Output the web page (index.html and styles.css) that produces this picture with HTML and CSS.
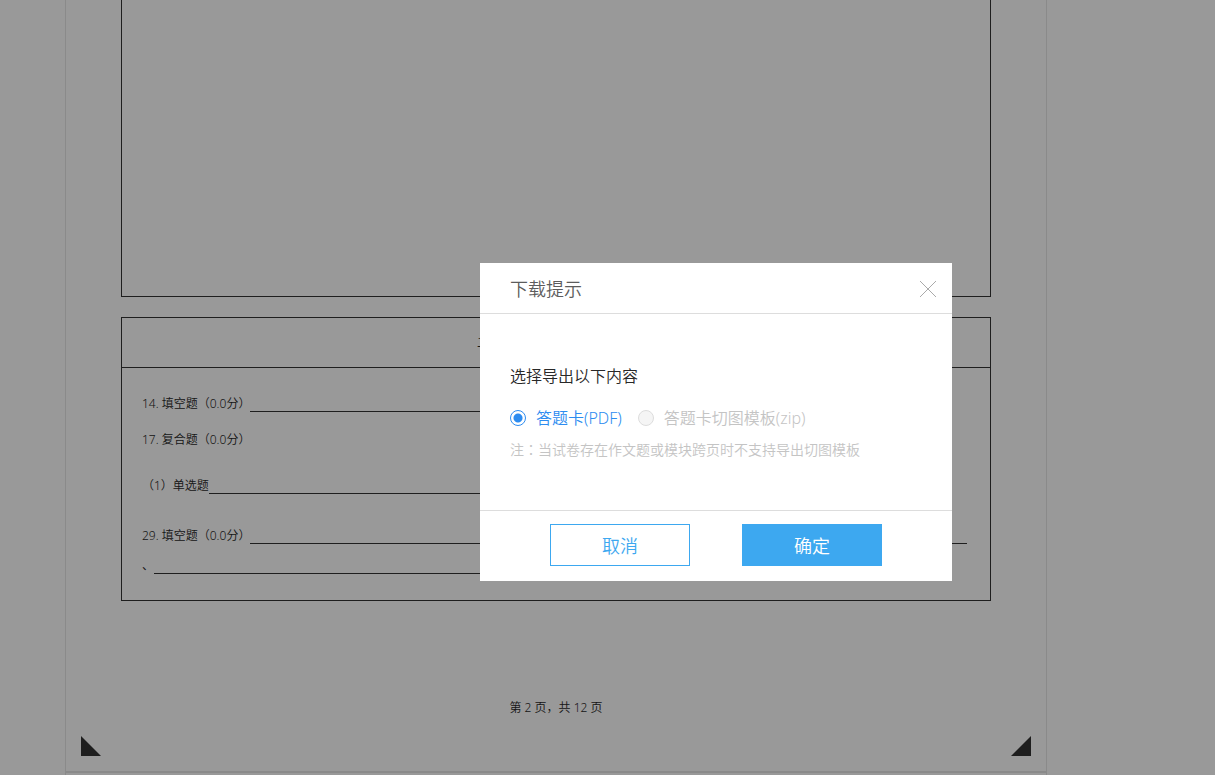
FILE: index.html
```html
<!DOCTYPE html>
<html lang="zh-CN">
<head>
<meta charset="utf-8">
<title>答题卡</title>
<link rel="stylesheet" href="styles.css">
</head>
<body>
<main class="workspace">
  <section class="sheet">
    <div class="answer-area"></div>
    <div class="question-box">
      <h2 class="box-title">二. 填空题（每小题共 0.0分）</h2>
      <div class="questions">
        <div class="question"><span>14. 填空题（0.0分）</span><span class="blank"></span></div>
        <div class="question question-group"><span>17. 复合题（0.0分）</span></div>
        <div class="question question-sub"><span>（1）单选题</span><span class="blank"></span></div>
        <div class="question question-last"><span>29. 填空题（0.0分）</span><span class="blank"></span></div>
        <div class="question question-more"><span>、</span><span class="blank"></span></div>
      </div>
    </div>
    <p class="page-number">第 2 页，共 12 页</p>
    <div class="marks">
      <svg class="mark" viewBox="0 0 20 20" aria-hidden="true"><path d="M0 0V20H20Z"/></svg>
      <svg class="mark" viewBox="0 0 20 20" aria-hidden="true"><path d="M20 0V20H0Z"/></svg>
    </div>
  </section>
  <section class="sheet sheet-next"></section>
</main>
<div class="overlay">
  <form class="dialog" role="dialog" aria-labelledby="dialog-title">
    <header class="dialog-header">
      <h1 class="dialog-title" id="dialog-title">下载提示</h1>
      <button class="close" type="button" aria-label="关闭">
        <svg class="close-icon" viewBox="0 0 16 16" aria-hidden="true"><path d="M0 0L16 16M16 0L0 16"/></svg>
      </button>
    </header>
    <div class="dialog-body">
      <p class="prompt">选择导出以下内容</p>
      <div class="options">
        <label class="option"><input class="radio" type="radio" name="type" checked><span>答题卡(PDF)</span></label>
        <label class="option option-disabled"><input class="radio" type="radio" name="type" disabled><span>答题卡切图模板(zip)</span></label>
      </div>
      <p class="note">注<span class="punct" lang="zh-TW">：</span>当试卷存在作文题或模块跨页时不支持导出切图模板</p>
    </div>
    <footer class="dialog-footer">
      <button class="button" type="button">取消</button>
      <button class="button button-primary" type="button">确定</button>
    </footer>
  </form>
</div>
</body>
</html>
```
FILE: styles.css
```css
* {
  box-sizing: border-box;
}

body {
  margin: 0;
  background: #fff;
  color: #282828;
  font: 350 12px/16px "Noto Sans", "Noto Sans CJK SC", sans-serif;
}

h1, h2, p {
  margin: 0;
  font-weight: 350;
}

button {
  font-family: inherit;
  font-weight: 350;
  cursor: pointer;
}

.punct {
  font-family: "Noto Sans CJK TC", sans-serif;
}

.workspace {
  display: flex;
  flex-direction: column;
  min-height: 100vh;
  padding: 0 168px 0 65px;
}

.sheet {
  border: 1px solid #e6e6e6;
  border-top: 0;
  border-bottom: 2px solid #e6e6e6;
}

.sheet-next {
  flex: 1;
  border-bottom: 0;
}

.answer-area {
  height: 297px;
  margin: 0 55px 20px;
  border: 1px solid #333;
  border-top: 0;
}

.question-box {
  margin: 0 55px;
  border: 1px solid #333;
}

.box-title {
  border-bottom: 1px solid #333;
  font-size: 12px;
  line-height: 49px;
  text-align: center;
}

.questions {
  padding: 28px 23px 26px 20px;
}

.question {
  display: flex;
  height: 16px;
}

.question-group {
  margin-top: 20px;
}

.question-sub {
  margin-top: 30px;
}

.question-last {
  margin-top: 34px;
}

.question-more {
  margin-top: 14px;
}

.blank {
  flex: 1;
  border-bottom: 1px solid #333;
}

.question:not(.question-last) .blank {
  margin-right: 100px;
}

.page-number {
  height: 16px;
  margin-top: 99px;
  text-align: center;
}

.marks {
  display: flex;
  justify-content: space-between;
  padding: 20px 15px 15px;
}

.mark {
  width: 20px;
  height: 20px;
  fill: #333;
}

.overlay {
  position: fixed;
  inset: 0;
  padding: 263px 0 0 480px;
  background: rgba(0, 0, 0, 0.4);
}

.dialog {
  width: 472px;
  background: #fff;
}

.dialog-header {
  display: flex;
  align-items: center;
  justify-content: space-between;
  padding: 2px 14px 0 30px;
  border-bottom: 1px solid #ddd;
}

.dialog-title {
  color: #5c5c5c;
  font-size: 18px;
  line-height: 48px;
}

.close {
  display: flex;
  padding: 2px;
  border: 0;
  background: none;
}

.close-icon {
  width: 16px;
  height: 16px;
  overflow: visible;
  fill: none;
  stroke: #aaa;
}

.dialog-body {
  padding: 50px 30px 51px;
}

.prompt {
  font-size: 16px;
  line-height: 24px;
}

.options {
  display: flex;
  gap: 16px;
  margin: 18px 0 9px;
}

.option {
  display: flex;
  align-items: center;
  gap: 10px;
  color: #2d8cf0;
  font-size: 16px;
  line-height: 24px;
}

.option-disabled {
  color: #c4c4c4;
}

.radio {
  appearance: none;
  width: 16px;
  height: 16px;
  margin: 0;
  border: 1px solid #2d8cf0;
  border-radius: 50%;
  background: #fff;
}

.radio:checked {
  background: radial-gradient(circle, #2d8cf0 4px, #fff 5px);
}

.radio:disabled {
  border-color: #ddd;
  background: #f5f5f5;
}

.note {
  height: 20px;
  color: #c4c4c4;
  font-size: 14px;
  line-height: 20px;
}

.dialog-footer {
  display: flex;
  justify-content: space-between;
  padding: 13px 70px 15px;
  border-top: 1px solid #ddd;
}

.button {
  width: 140px;
  height: 42px;
  border: 1px solid #3da8f0;
  background: #fff;
  color: #3da8f0;
  font-size: 18px;
}

.button-primary {
  background: #3da8f0;
  color: #fff;
}
```
